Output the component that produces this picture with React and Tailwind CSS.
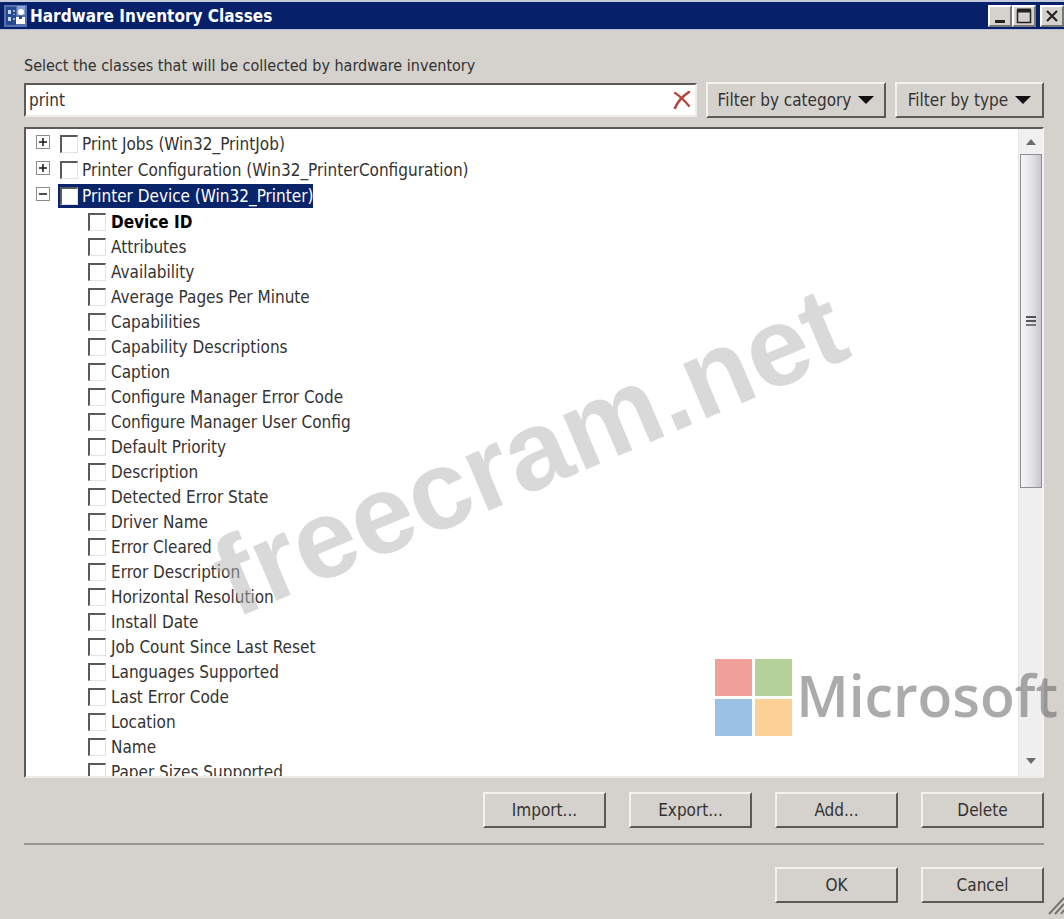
import { useState } from "react"

const rootClasses = [
  { id: "printjob", label: "Print Jobs (Win32_PrintJob)", expanded: false },
  { id: "printerconfig", label: "Printer Configuration (Win32_PrinterConfiguration)", expanded: false },
  { id: "printer", label: "Printer Device (Win32_Printer)", expanded: true, selected: true },
]

const printerProperties = [
  "Device ID",
  "Attributes",
  "Availability",
  "Average Pages Per Minute",
  "Capabilities",
  "Capability Descriptions",
  "Caption",
  "Configure Manager Error Code",
  "Configure Manager User Config",
  "Default Priority",
  "Description",
  "Detected Error State",
  "Driver Name",
  "Error Cleared",
  "Error Description",
  "Horizontal Resolution",
  "Install Date",
  "Job Count Since Last Reset",
  "Languages Supported",
  "Last Error Code",
  "Location",
  "Name",
  "Paper Sizes Supported",
]

const raised =
  "border-2 border-t-[#f4f2ee] border-l-[#f4f2ee] border-r-[#5c5956] border-b-[#5c5956] bg-[#d5d1cc]"

function CheckBox({ id }) {
  return (
    <input
      id={id}
      type="checkbox"
      className="h-[18px] w-[18px] shrink-0 appearance-none border border-t-2 border-l-2 border-t-[#5a5a5a] border-l-[#5a5a5a] border-r-[#e2e2e2] border-b-[#e2e2e2] bg-white checked:bg-[#9a9a9a]"
    />
  )
}

function Expander({ expanded }) {
  return (
    <button type="button" aria-label={expanded ? "Collapse" : "Expand"} className="mb-1 shrink-0">
      <svg width="14" height="14" viewBox="0 0 14 14" fill="none">
        <rect x="0.5" y="0.5" width="13" height="13" fill="#fff" stroke="#8c8c8c" />
        <path d="M3 7h8" stroke="#222" strokeWidth="1.6" />
        {!expanded && <path d="M7 3v8" stroke="#222" strokeWidth="1.6" />}
      </svg>
    </button>
  )
}

function DialogButton({ children }) {
  return (
    <button type="button" className={`h-9 w-[123px] ${raised}`}>
      {children}
    </button>
  )
}

function FilterButton({ children, className }) {
  return (
    <button type="button" className={`flex h-9 shrink-0 items-center justify-center gap-[7px] ${raised} ${className}`}>
      {children}
      <svg width="16" height="8" viewBox="0 0 16 8">
        <path d="M0 0h16L8 8z" fill="#111" />
      </svg>
    </button>
  )
}

function TitleBar() {
  return (
    <header className="flex h-[30px] shrink-0 items-center border-t-2 border-b border-t-[#c3cbdc] border-b-[#b5bdd4] bg-[#06216a] pl-1 text-white">
      <svg width="23" height="22" viewBox="0 0 23 22" className="shrink-0">
        <rect width="23" height="22" fill="#5870ae" />
        <rect x="2" y="2" width="10" height="18" fill="#27498f" />
        <path d="M4 5h3v4H4zM4 12h3v4H4z" fill="#c9d9f4" />
        <path d="M9 5h2v2H9zM9 9h2v1H9zM9 13h2v2H9z" fill="#8fb0e6" />
        <path d="M13 1h8v9h-8z" fill="#86a2da" />
        <circle cx="17" cy="7" r="3" fill="#fff" />
        <path d="M12 12h9v7h-9z" fill="#fff" />
        <path d="M15 11h3v3h-3z" fill="#27498f" />
      </svg>
      <h1 className="ml-[3px] flex-1 text-[17px] font-bold">Hardware Inventory Classes</h1>
      <div className="flex text-[#222]">
        <button type="button" aria-label="Minimize" className="h-[22px] w-6 border-2 border-t-white border-l-white border-r-[#777] border-b-[#777] bg-[#d5d1cc]">
          <svg width="20" height="18" viewBox="0 0 20 18">
            <path d="M5 14.5h10" stroke="currentColor" strokeWidth="3" />
          </svg>
        </button>
        <button type="button" aria-label="Maximize" className="h-[22px] w-6 border-2 border-t-white border-l-white border-r-[#777] border-b-[#777] bg-[#d5d1cc]">
          <svg width="20" height="18" viewBox="0 0 20 18" fill="none">
            <path d="M3.5 3v12.5h13V3" stroke="currentColor" strokeWidth="1.5" />
            <path d="M3 3.5h14" stroke="currentColor" strokeWidth="4" />
          </svg>
        </button>
        <button type="button" aria-label="Close" className="ml-1 h-[22px] w-6 border-2 border-t-white border-l-white border-r-[#777] border-b-[#777] bg-[#d5d1cc]">
          <svg width="20" height="18" viewBox="0 0 20 18">
            <path d="M5 4l10 10M15 4L5 14" stroke="currentColor" strokeWidth="2.2" />
          </svg>
        </button>
      </div>
    </header>
  )
}

function ClassTree() {
  return (
    <div className="min-w-0 flex-1 overflow-hidden pt-[2px] pl-[10px]">
      <ul>
        {rootClasses.map((item) => (
          <li key={item.id} className="flex h-[26px] items-center">
            <Expander expanded={item.expanded} />
            <div
              className={
                item.selected
                  ? "ml-2 flex h-6 items-center gap-[2px] bg-[#0a246a] pl-[2px] text-white"
                  : "ml-2 flex h-6 items-center gap-[2px] pl-[2px]"
              }
            >
              <CheckBox id={item.id} />
              <label htmlFor={item.id} className="whitespace-nowrap pl-[2px]">
                {item.label}
              </label>
            </div>
          </li>
        ))}
      </ul>
      <ul className="pl-[52px]">
        {printerProperties.map((name, index) => (
          <li key={name} className="flex h-[25px] items-center gap-[5px]">
            <CheckBox id={`prop-${index}`} />
            <label htmlFor={`prop-${index}`} className={index === 0 ? "font-bold text-black" : ""}>
              {name}
            </label>
          </li>
        ))}
      </ul>
    </div>
  )
}

function ScrollBar() {
  return (
    <div className="flex w-6 shrink-0 flex-col items-center border-l border-[#e6e6e6] bg-[#f0f0f0]">
      <button type="button" aria-label="Scroll up" className="flex h-[25px] w-full shrink-0 items-center justify-center">
        <svg width="10" height="6" viewBox="0 0 10 6">
          <path d="M0 6L5 0l5 6z" fill="#6d6d6d" />
        </svg>
      </button>
      <div className="flex h-[334px] w-[22px] flex-col items-center justify-center gap-[2px] border border-[#8f8f92] bg-linear-to-r from-[#f6f5f7] via-[#e6e4e8] to-[#c9c6ce]">
        <div className="h-[2px] w-[10px] bg-[#555]"></div>
        <div className="h-[2px] w-[10px] bg-[#555]"></div>
        <div className="h-[2px] w-[10px] bg-[#777]"></div>
      </div>
      <button type="button" aria-label="Scroll down" className="mt-auto flex h-[30px] w-full items-center justify-center">
        <svg width="10" height="6" viewBox="0 0 10 6">
          <path d="M0 0h10L5 6z" fill="#6d6d6d" />
        </svg>
      </button>
    </div>
  )
}

function MicrosoftMark() {
  return (
    <div className="pointer-events-none absolute right-[6px] bottom-[183px] flex items-start gap-1 opacity-50">
      <svg width="77" height="77" viewBox="0 0 77 77">
        <path d="M0 0h37v37H0z" fill="#e24333" />
        <path d="M40 0h37v37H40z" fill="#69a536" />
        <path d="M0 40h37v37H0z" fill="#3a86cc" />
        <path d="M40 40h37v37H40z" fill="#fba332" />
      </svg>
      <span className="font-['Open_Sans',sans-serif] text-[57px] leading-[72px] font-semibold text-[#5a5a5c]">
        Microsoft
      </span>
    </div>
  )
}

export default function App() {
  const [query, setQuery] = useState("print")

  return (
    <div className="relative flex h-screen flex-col overflow-hidden bg-[#d5d1cc] font-['DejaVu_Sans_Condensed','DejaVu_Sans',sans-serif] text-[17px] leading-6 text-[#333]">
      <TitleBar />

      <main className="flex min-h-0 flex-1 flex-col pt-6 pr-5 pb-4 pl-6">
        <label htmlFor="search" className="text-base">
          Select the classes that will be collected by hardware inventory
        </label>

        <div className="mt-1 flex items-center gap-[9px]">
          <div className="flex h-[34px] flex-1 items-center border-2 border-t-[#5c5956] border-l-[#5c5956] border-r-[#efedea] border-b-[#efedea] bg-white pr-1 pl-[3px]">
            <input
              id="search"
              type="text"
              value={query}
              onChange={(e) => setQuery(e.target.value)}
              className="min-w-0 flex-1 outline-none"
            />
            <button type="button" aria-label="Clear search" onClick={() => setQuery("")}>
              <svg width="18" height="18" viewBox="0 0 18 18" fill="none" strokeLinecap="round">
                <path d="M2 2c5 3 10 8 14 13" stroke="#b5483c" strokeWidth="2.2" />
                <path d="M16 1C10 5 5 10 2 17" stroke="#b5483c" strokeWidth="2.6" />
              </svg>
            </button>
          </div>
          <FilterButton className="w-[180px]">Filter by category</FilterButton>
          <FilterButton className="w-[149px]">Filter by type</FilterButton>
        </div>

        <div className="mt-[9px] flex min-h-0 flex-1 border-2 border-t-[#5c5956] border-l-[#5c5956] border-r-[#f4f2f0] border-b-[#efebe8] bg-white">
          <ClassTree />
          <ScrollBar />
        </div>

        <div className="mt-[14px] flex justify-end gap-[23px]">
          <DialogButton>Import...</DialogButton>
          <DialogButton>Export...</DialogButton>
          <DialogButton>Add...</DialogButton>
          <DialogButton>Delete</DialogButton>
        </div>

        <hr className="mt-[15px] border-t-2 border-[#999692]" />

        <div className="mt-[22px] flex justify-end gap-[23px]">
          <DialogButton>OK</DialogButton>
          <DialogButton>Cancel</DialogButton>
        </div>
      </main>

      {/* Resize grip */}
      <svg width="16" height="20" viewBox="0 0 16 20" className="absolute right-0 bottom-1" stroke="#77736f" strokeWidth="2">
        <path d="M1 19L16 3M7 19l9-10M13 19l3-4" />
      </svg>

      {/* Watermarks */}
      <div className="pointer-events-none absolute top-[523px] left-[242px] origin-bottom-left rotate-[-23deg] font-['Liberation_Sans',Arial,sans-serif] text-[112px] leading-none font-bold text-[#b4b4b4]/50">
        freecram.net
      </div>
      <MicrosoftMark />
    </div>
  )
}
